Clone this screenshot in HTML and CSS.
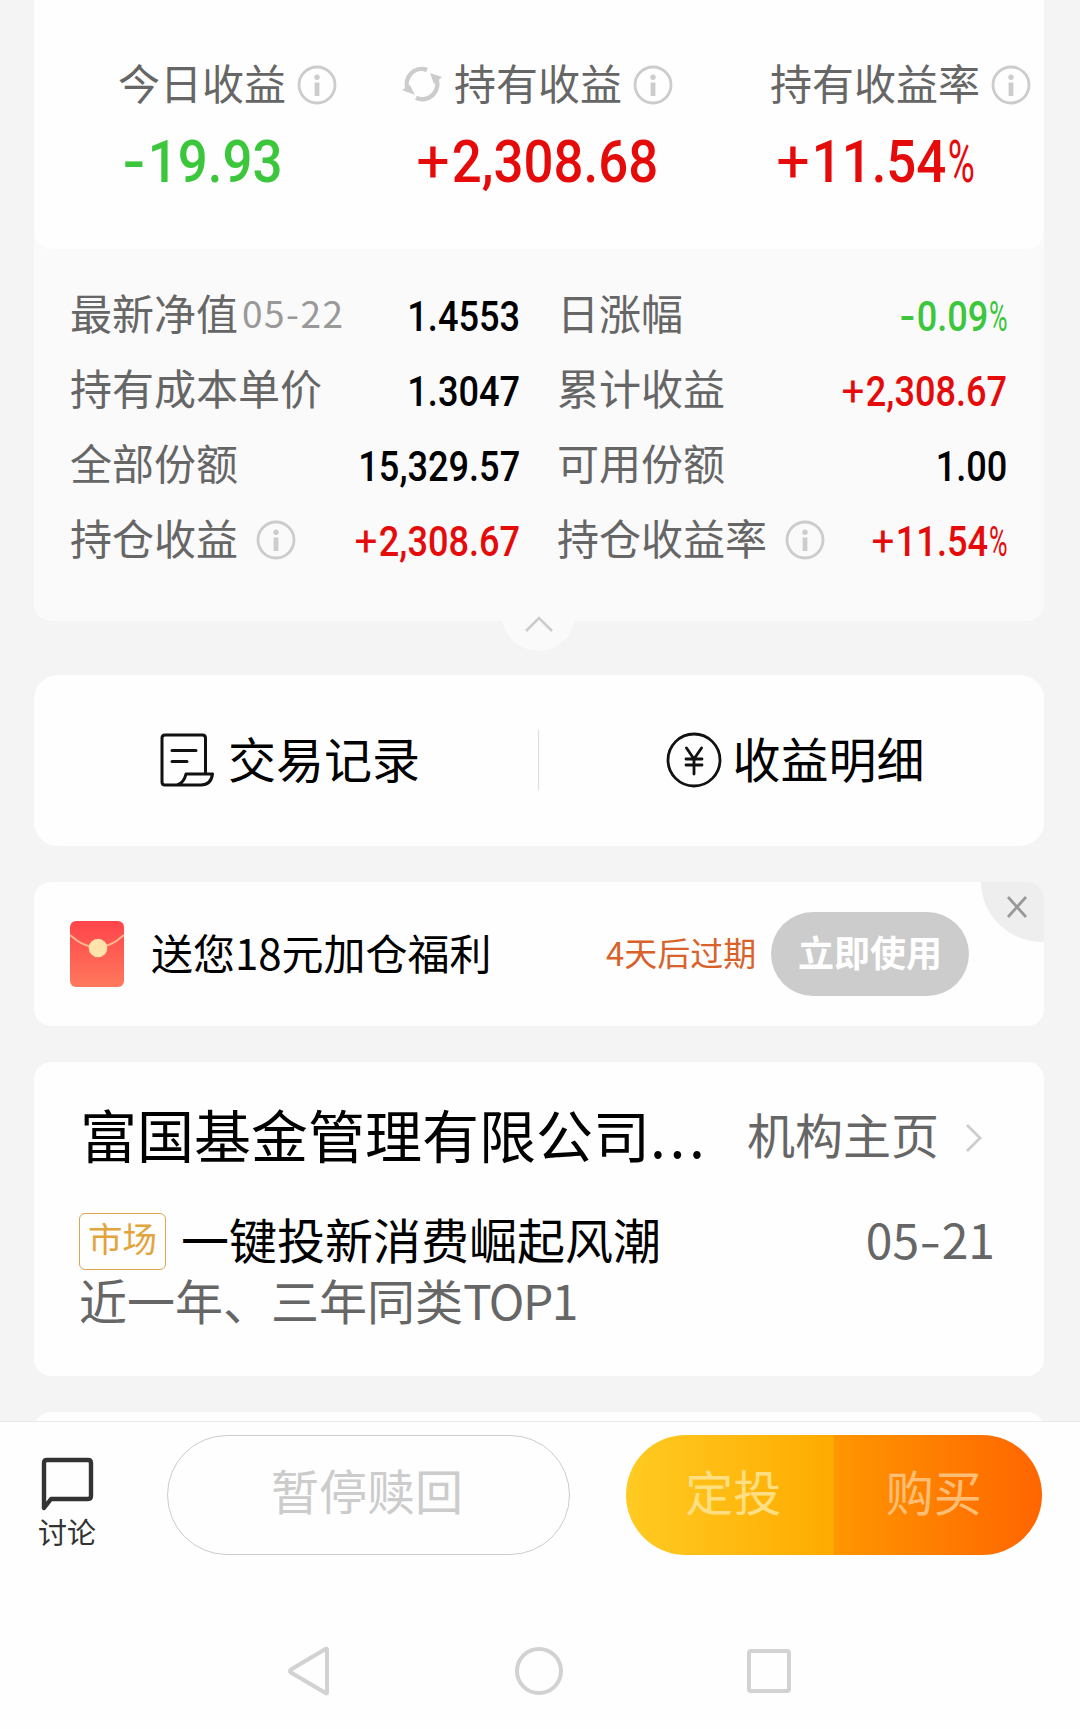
FILE: index.html
```html
<!DOCTYPE html>
<html lang="zh-CN">
<head>
  <meta charset="UTF-8">
  <meta name="viewport" content="width=device-width, initial-scale=1.0">
  <title>持仓详情</title>
  <link rel="stylesheet" href="styles.css">
</head>
<body>
  <svg width="0" height="0" class="defs">
    <symbol id="info" viewBox="0 0 40 40">
      <circle cx="20" cy="20" r="18" fill="none" stroke="#ccc" stroke-width="2.8"/>
      <circle cx="20" cy="12.3" r="2.700" fill="#ccc"/>
      <path d="M20 17.500V31" stroke="#ccc" stroke-width="4.800"/>
    </symbol>
  </svg>

  <main class="page">
    <section class="holding">
      <div class="summary">
        <div class="stat today">
          <div class="label">今日收益<svg class="info"><use href="#info"/></svg></div>
          <div class="big green"><span class="minus">-</span>19.93</div>
        </div>
        <div class="stat total">
          <div class="label">
            <svg class="refresh" viewBox="0 0 40 36">
              <g fill="none" stroke="#ccc" stroke-width="4.400">
                <path d="M6 24A15 15 0 0 1 25 3.900"/>
                <path d="M34 12A15 15 0 0 1 14 31.800"/>
              </g>
              <path d="M28 7l12 4-8 7zM0 24l8-5 5 10z" fill="#ccc"/>
            </svg>持有收益<svg class="info"><use href="#info"/></svg>
          </div>
          <div class="big red"><span class="plus">+</span>2,308.68</div>
        </div>
        <div class="stat rate">
          <div class="label">持有收益率<svg class="info"><use href="#info"/></svg></div>
          <div class="big red"><span class="plus">+</span>11.54<span class="pct">%</span></div>
        </div>
      </div>

      <div class="details">
        <div class="row"><span class="label">最新净值<small>05-22</small></span><span class="num">1.4553</span></div>
        <div class="row"><span class="label">日涨幅</span><span class="num green"><span class="minus">-</span>0.09<span class="pct">%</span></span></div>
        <div class="row"><span class="label">持有成本单价</span><span class="num">1.3047</span></div>
        <div class="row"><span class="label">累计收益</span><span class="num red"><span class="plus">+</span>2,308.67</span></div>
        <div class="row"><span class="label">全部份额</span><span class="num">15,329.57</span></div>
        <div class="row"><span class="label">可用份额</span><span class="num">1.00</span></div>
        <div class="row"><span class="label">持仓收益<svg class="info"><use href="#info"/></svg></span><span class="num red"><span class="plus">+</span>2,308.67</span></div>
        <div class="row"><span class="label">持仓收益率<svg class="info"><use href="#info"/></svg></span><span class="num red"><span class="plus">+</span>11.54<span class="pct">%</span></span></div>
      </div>
      <div class="fold">
        <svg width="30" height="18" viewBox="0 0 30 18"><path d="M2 16L15 3l13 13" fill="none" stroke="#ccc" stroke-width="2.600"/></svg>
      </div>
    </section>

    <section class="actions">
      <a class="action records">
        <svg width="54" height="54" viewBox="0 0 54 54" fill="none" stroke="#111" stroke-width="3" stroke-linejoin="round" stroke-linecap="round">
          <path d="M45.500 40V5q0-3-3-3H5Q2 2 2 5v44q0 3 3 3h36q10 0 11.500-11H26q-2 9-9 11"/>
          <path d="M12 17.500h24M12 28.500h15"/>
        </svg>
        <span>交易记录</span>
      </a>
      <a class="action income">
        <svg width="56" height="56" viewBox="0 0 56 56" fill="none" stroke="#111" stroke-width="2.800" stroke-linecap="round">
          <circle cx="28" cy="28" r="26"/>
          <path d="M20.500 16l7.500 11 7.500-11M28 27V42M20 27h16M20 33h16"/>
        </svg>
        <span>收益明细</span>
      </a>
    </section>

    <section class="promo">
      <svg class="packet" width="54" height="66" viewBox="0 0 54 66">
        <defs>
          <linearGradient id="redbag" x1="0" y1="0" x2="0" y2="1">
            <stop offset="0" stop-color="#ff444b"/>
            <stop offset="1" stop-color="#ff795c"/>
          </linearGradient>
        </defs>
        <rect width="54" height="66" rx="6" fill="url(#redbag)"/>
        <path d="M0 14q27 25 54 0" fill="none" stroke="#ffb98c" stroke-width="2"/>
        <circle cx="28" cy="27" r="9.300" fill="#ffe3ab"/>
      </svg>
      <span class="promo-text">送您18元加仓福利</span>
      <span class="expire">4天后过期</span>
      <span class="use-btn">立即使用</span>
      <span class="close">
        <svg width="20" height="22" viewBox="0 0 20 22"><path d="M1 1l18 20M19 1L1 21" stroke="#999" stroke-width="2.800"/></svg>
      </span>
    </section>

    <section class="org">
      <div class="org-head">
        <h2>富国基金管理有限公司<span class="dots">...</span></h2>
        <span class="org-link">机构主页</span>
        <svg width="18" height="30" viewBox="0 0 18 30"><path d="M2 2l13 13L2 28" fill="none" stroke="#ccc" stroke-width="2.800"/></svg>
      </div>
      <div class="post">
        <span class="tag">市场</span>
        <span class="post-title">一键投新消费崛起风潮</span>
        <span class="date">05<span class="dash">-</span>21</span>
      </div>
      <p class="post-desc">近一年、三年同类<span>TOP1</span></p>
    </section>

    <section class="next"></section>
  </main>

  <footer class="bar">
    <div class="discuss">
      <svg width="54" height="54" viewBox="0 0 54 54"><path d="M3 51V6q0-3 3-3h41q3 0 3 3v33q0 3-3 3H10z" fill="none" stroke="#333" stroke-width="4.400" stroke-linejoin="round"/></svg>
      <span>讨论</span>
    </div>
    <div class="redeem">暂停赎回</div>
    <div class="buy-group">
      <div class="invest">定投</div>
      <div class="buy">购买</div>
    </div>
  </footer>

  <nav class="system">
    <svg width="44" height="50" viewBox="0 0 44 50"><path d="M40 3.500v43Q40 48 38.500 47L4 26.500Q2 25 4 23.500L38.500 3Q40 2 40 3.500z"/></svg>
    <svg width="48" height="48" viewBox="0 0 48 48"><circle cx="24" cy="24" r="22"/></svg>
    <svg width="44" height="44" viewBox="0 0 44 44"><rect x="2" y="2" width="40" height="40" rx="2"/></svg>
  </nav>
</body>
</html>
```
FILE: styles.css
```css
* {
  box-sizing: border-box;
}

body {
  margin: 0;
  width: 1080px;
  height: 1729px;
  overflow: hidden;
  background-color: #fefefe;
  font-family: "Noto Sans CJK SC", sans-serif;
  color: #000;
}

svg {
  display: block;
  flex: none;
}

.defs {
  display: none;
}

.page {
  height: 1421px;
  padding: 0 36px 0 34px;
  overflow: hidden;
  background-color: #f4f4f4;
}

.green {
  color: #3cc63c;
}

.red {
  color: #e60b0b;
}

.label {
  display: flex;
  align-items: center;
  font-size: 42px;
  line-height: 60px;
  color: #666;
  white-space: nowrap;
}

.info {
  width: 40px;
  height: 40px;
}

/* top card */
.holding {
  position: relative;
  height: 621px;
  border-radius: 0 0 17px 17px;
  background-color: #fafafa;
}

.summary {
  display: flex;
  height: 249px;
  padding-top: 52px;
  border-radius: 0 0 17px 17px;
  background-color: #fefefe;
}

.stat {
  flex: none;
}

.stat .info {
  margin: 5px 0 0 11px;
}

.today {
  width: 284px;
  padding-left: 84px;
}

.total {
  width: 369px;
  padding-left: 84px;
}

.rate {
  padding-left: 83px;
}

.refresh {
  width: 40px;
  height: 36px;
  margin: 4px 12px 0 0;
}

.big,
.num {
  font-family: Roboto, "Noto Sans CJK SC", sans-serif;
  font-weight: 500;
  white-space: nowrap;
}

.big {
  width: max-content;
  margin-top: 14px;
  font-size: 60px;
  line-height: 72px;
  transform: scaleX(.88);
  transform-origin: left;
}

.today .big {
  margin-left: 7px;
}

.total .big {
  margin-left: 16px;
}

.rate .big {
  margin-left: 8px;
}

.plus,
.pct {
  font-weight: 400;
}

.plus {
  display: inline-block;
  margin-right: .07em;
  transform: scaleX(1.12);
}

.pct {
  display: inline-block;
  width: .5em;
  margin-left: .02em;
  transform: scaleX(.7);
  transform-origin: left;
}

.minus {
  display: inline-block;
  margin-right: .09em;
  transform: scaleX(1.25);
}

.details {
  display: grid;
  grid-template-columns: 450px 450px;
  grid-auto-rows: 75px;
  column-gap: 37px;
  padding: 27px 37px 0 36px;
}

.row {
  display: flex;
  align-items: center;
  justify-content: space-between;
}

.row .label {
  margin-top: -3px;
}

.row small {
  margin-left: 4px;
  font-size: 37px;
  letter-spacing: 1.5px;
  color: #999;
}

.row .info {
  margin: 6px 0 0 18px;
}

.num {
  padding-top: 7px;
  font-size: 42px;
  line-height: 50px;
  transform: scaleX(.86);
  transform-origin: right;
}

.fold {
  position: absolute;
  left: 468px;
  top: 578px;
  width: 73px;
  height: 73px;
  border-radius: 50%;
  background-color: #fafafa;
}

.fold svg {
  margin: 37px auto 0;
}

/* records / income */
.actions {
  display: flex;
  height: 171px;
  margin-top: 54px;
  border-radius: 24px;
  background-color: #fefefe;
}

.action {
  display: flex;
  flex: 1;
  align-items: center;
  padding-bottom: 2px;
  font-size: 48px;
  line-height: 70px;
}

.action span {
  margin-top: -6px;
}

.records {
  gap: 14px;
  padding-left: 126px;
  background: linear-gradient(#ddd, #ddd) right 55px / 1px 60px no-repeat;
}

.income {
  gap: 11px;
  padding-left: 127px;
}

/* promo */
.promo {
  position: relative;
  display: flex;
  align-items: center;
  height: 144px;
  margin-top: 36px;
  padding-left: 36px;
  border-radius: 17px;
  background-color: #fefefe;
  overflow: hidden;
}

.promo-text {
  width: 455px;
  margin: -5px 0 0 27px;
  font-size: 42px;
  line-height: 60px;
}

.expire {
  width: 165px;
  margin-top: -4px;
  font-size: 33px;
  line-height: 48px;
  color: #d9622b;
  white-space: nowrap;
}

.use-btn {
  width: 198px;
  height: 84px;
  border-radius: 42px;
  background-color: #ccc;
  font-size: 36px;
  font-weight: 700;
  line-height: 79px;
  text-align: center;
  color: #fff;
}

.close {
  position: absolute;
  top: 0;
  right: 0;
  width: 63px;
  height: 60px;
  padding: 14px 0 0 26px;
  border-bottom-left-radius: 62px 60px;
  background-color: #eee;
}

/* organisation */
.org {
  height: 314px;
  margin-top: 36px;
  padding: 32px 49px 0 45px;
  border-radius: 17px;
  background-color: #fefefe;
}

.org-head {
  display: flex;
  align-items: center;
  height: 80px;
}

.org h2 {
  width: 667px;
  margin: -3px 0 0 1px;
  font-size: 57px;
  font-weight: 400;
  line-height: 80px;
  white-space: nowrap;
}

.dots {
  letter-spacing: 3.6px;
}

.org-link {
  width: 218px;
  margin-top: -2px;
  font-size: 48px;
  line-height: 80px;
  color: #666;
}

.org-head svg {
  margin-top: 7px;
}

.post {
  display: flex;
  align-items: center;
  height: 57px;
  margin-top: 39px;
  font-size: 48px;
}

.tag {
  width: 87px;
  height: 57px;
  border: 1.5px solid #dba64e;
  border-radius: 6px;
  font-size: 34.5px;
  line-height: 46px;
  text-align: center;
  color: #e2a43c;
}

.post-title {
  margin: -7px 0 0 15px;
  line-height: 56px;
}

.date {
  margin: -7px 0 0 auto;
  line-height: 56px;
  color: #666;
}

.dash {
  display: inline-block;
  margin: 0 3px;
  transform: scaleX(1.3);
}

.post-desc {
  margin: -2px 0 0;
  font-size: 48px;
  line-height: 62px;
  color: #666;
}

.post-desc span {
  letter-spacing: -1.6px;
}

.next {
  height: 100px;
  margin-top: 36px;
  border-radius: 17px;
  background-color: #fefefe;
}

/* bottom bar */
.bar {
  display: flex;
  height: 160px;
  padding: 13px 38px 0 38px;
  border-top: 1px solid #eaeaea;
}

.discuss {
  width: 129px;
  padding-top: 22px;
  font-size: 29px;
  line-height: 40px;
  color: #333;
}

.discuss svg {
  margin-left: 3px;
}

.discuss span {
  display: block;
}

.redeem {
  width: 403px;
  height: 120px;
  padding-right: 3px;
  border: 1px solid #ccc;
  border-radius: 60px;
  font-size: 48px;
  line-height: 107px;
  text-align: center;
  color: #ccc;
}

.buy-group {
  display: flex;
  width: 416px;
  height: 120px;
  margin-left: 56px;
  border-radius: 60px;
  overflow: hidden;
  font-size: 48px;
  line-height: 110px;
  text-align: center;
}

.invest {
  flex: 1;
  padding-left: 7px;
  background: linear-gradient(90deg, #ffcb22, #ffaa00);
  color: #ffdf82;
}

.buy {
  flex: 1;
  padding-right: 8px;
  background: linear-gradient(90deg, #ff9600, #ff6500);
  color: #ffbe75;
}

.system {
  display: flex;
  align-items: center;
  height: 50px;
  margin-top: 65px;
  padding-left: 287px;
  gap: 184px;
}

.system svg {
  fill: none;
  stroke: #d2d2d2;
  stroke-width: 4;
}
```
